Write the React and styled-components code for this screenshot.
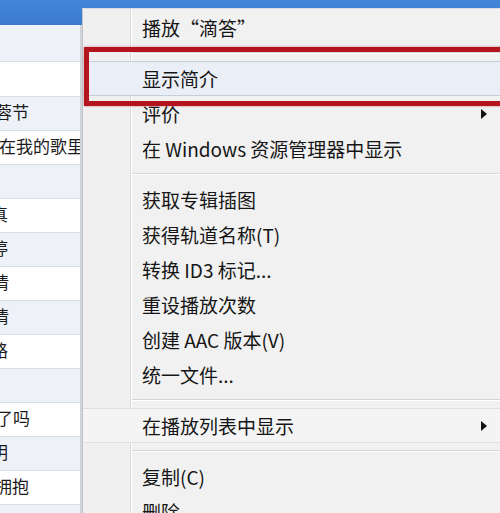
import styled, { createGlobalStyle } from "styled-components";

const GlobalStyle = createGlobalStyle`
  html, body {
    margin: 0;
    padding: 0;
  }
  body {
    background: #ffffff;
    font-family: "Noto Sans CJK SC", "Noto Sans", sans-serif;
    overflow: hidden;
  }
`;

const songs = [
  { h: 37, text: "" },
  { h: 35, text: "" },
  { h: 34, text: "蓉节", cut: 5 },
  { h: 34, text: "在我的歌里", cut: 1 },
  { h: 34, text: "" },
  { h: 34, text: "真", cut: 9 },
  { h: 34, text: "婷", cut: 9 },
  { h: 34, text: "情", cut: 8 },
  { h: 34, text: "情", cut: 8 },
  { h: 34, text: "路", cut: 9 },
  { h: 34, text: "" },
  { h: 34, text: "了吗", cut: 4 },
  { h: 34, text: "明", cut: 9 },
  { h: 34, text: "拥抱", cut: 5 },
  { h: 34, text: "" },
];

const menu = [
  { label: "播放“滴答”", top: true },
  { sep: true },
  { label: "显示简介", active: true },
  { label: "评价", sub: true },
  { label: "在 Windows 资源管理器中显示" },
  { sep: true },
  { label: "获取专辑插图" },
  { label: "获得轨道名称(T)" },
  { label: "转换 ID3 标记..." },
  { label: "重设播放次数" },
  { label: "创建 AAC 版本(V)" },
  { label: "统一文件..." },
  { sep: true },
  { label: "在播放列表中显示", sub: true, soft: true },
  { sep: true },
  { label: "复制(C)" },
  { label: "删除" },
];

export default function App() {
  return (
    <>
      <GlobalStyle />
      <Window>
        <TitleBar />
        <Body>
          <SongList>
            {songs.map((s, i) => (
              <SongRow key={i} $h={s.h} $alt={i % 2 === 0}>
                <SongTitle $cut={s.cut || 0}>{s.text}</SongTitle>
              </SongRow>
            ))}
          </SongList>
          <Pane />
        </Body>
        <ContextMenu>
          {menu.map((m, i) =>
            m.sep ? (
              <Separator key={i} />
            ) : (
              <MenuItem key={i} $active={m.active} $soft={m.soft}>
                <span>{m.label}</span>
                {m.sub && <SubArrow />}
              </MenuItem>
            )
          )}
        </ContextMenu>
        <Callout />
      </Window>
    </>
  );
}

const Window = styled.div`
  position: relative;
  width: 500px;
  height: 513px;
  overflow: hidden;
  display: flex;
  flex-direction: column;
`;

const TitleBar = styled.div`
  height: 25px;
  flex-shrink: 0;
  background: linear-gradient(to bottom, #4387d8, #3b7bcf);
`;

const Body = styled.div`
  flex: 1;
  display: flex;
  background: #f0f0f0;
`;

const SongList = styled.div`
  width: 80px;
  border-right: 2px solid #cfd4da;
  display: flex;
  flex-direction: column;
  overflow: hidden;
`;

const SongRow = styled.div`
  height: ${(p) => p.$h}px;
  flex-shrink: 0;
  box-sizing: border-box;
  border-bottom: 1px solid #d9dee5;
  background: ${(p) => (p.$alt ? "#eef2f8" : "#ffffff")};
  display: flex;
  align-items: center;
  overflow: hidden;
`;

const SongTitle = styled.span`
  margin-left: -${(p) => p.$cut}px;
  font-size: 17px;
  line-height: 1;
  color: #1c1c1c;
  white-space: nowrap;
  padding-bottom: 5px;
`;

const Pane = styled.div`
  flex: 1;
  background: #f0f0f0;
`;

const ContextMenu = styled.div`
  position: absolute;
  left: 82px;
  top: 8px;
  width: 422px;
  box-sizing: border-box;
  padding-top: 1px;
  border-left: 1px solid #c4c4c4;
  border-top: 1px solid #d6dde6;
  background: linear-gradient(
    to right,
    #f0f0f0 47px,
    #dadada 47px,
    #dadada 48px,
    #ffffff 48px,
    #ffffff 49px,
    #f1f1f1 49px
  );
  display: flex;
  flex-direction: column;
  height: 540px;
`;

const MenuItem = styled.div`
  height: 35px;
  flex-shrink: 0;
  box-sizing: border-box;
  display: flex;
  align-items: center;
  justify-content: space-between;
  padding: 0 17px 0 59px;
  font-size: 19px;
  color: #151515;
  white-space: nowrap;
  background: ${(p) =>
    p.$active ? "#eaeff7" : p.$soft ? "#f4f4f4" : "transparent"};
  border-top: 1px solid
    ${(p) => (p.$active ? "#c3cfdf" : p.$soft ? "#dedede" : "transparent")};
  border-bottom: 1px solid
    ${(p) => (p.$active ? "#c3cfdf" : p.$soft ? "#dedede" : "transparent")};
`;

const SubArrow = styled.i`
  width: 0;
  height: 0;
  border-left: 6px solid #111111;
  border-top: 5.5px solid transparent;
  border-bottom: 5.5px solid transparent;
`;

const Separator = styled.div`
  height: 0;
  flex-shrink: 0;
  margin: 7px 0 7px 49px;
  border-top: 1px solid #d5d5d5;
  border-bottom: 1px solid #ffffff;
`;

const Callout = styled.div`
  position: absolute;
  left: 84px;
  top: 47px;
  width: 440px;
  height: 59px;
  box-sizing: border-box;
  border: 5px solid #b3141d;
  box-shadow: 0 0 2px rgba(200, 40, 50, 0.6);
`;
